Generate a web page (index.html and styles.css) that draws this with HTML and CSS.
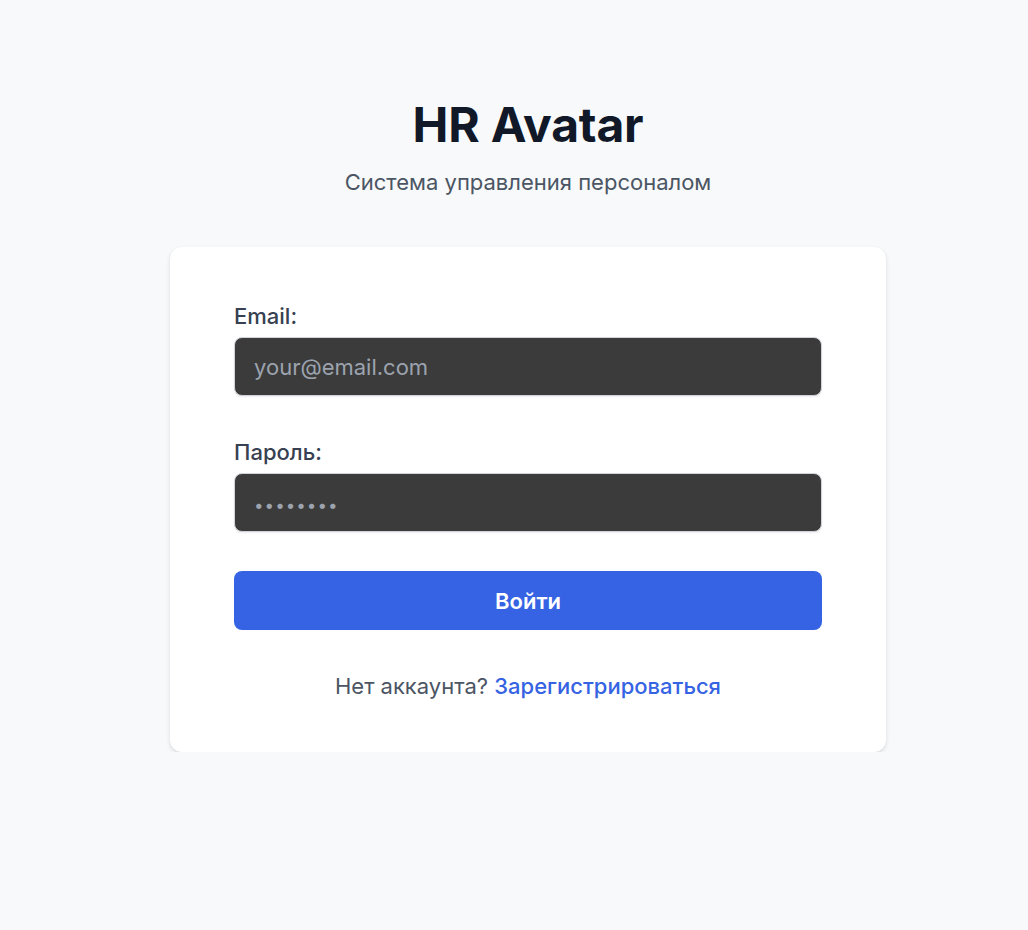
FILE: index.html
```html
<!DOCTYPE html>
<html lang="ru">
<head>
<meta charset="utf-8">
<title>HR Avatar</title>
<link rel="stylesheet" href="styles.css">
</head>
<body>
<main class="page">
  <header class="brand">
    <h1 class="brand-title">HR Avatar</h1>
    <p class="brand-sub">Система управления персоналом</p>
  </header>
  <section class="card">
    <form class="form">
      <div class="field">
        <label class="label" for="email">Email:</label>
        <input class="input" id="email" type="email" placeholder="your@email.com">
      </div>
      <div class="field">
        <label class="label" for="pass">Пароль:</label>
        <input class="input input-pass" id="pass" type="password" placeholder="••••••••">
      </div>
      <button class="btn" type="button">Войти</button>
    </form>
    <p class="foot">Нет аккаунта? <a class="link" href="#">Зарегистрироваться</a></p>
  </section>
</main>
</body>
</html>
```

FILE: styles.css
```css
* { box-sizing: border-box; }
html, body { margin: 0; padding: 0; }
body {
  background: #f8f9fb;
  font-family: Inter, "Liberation Sans", sans-serif;
  color: #111827;
}
.page {
  display: flex;
  flex-direction: column;
  align-items: center;
  padding: 96px 0 0 28px;
}
.brand { text-align: center; }
.brand-title {
  margin: 0;
  font-size: 48px;
  line-height: 58px;
  font-weight: 700;
  color: #111827;
  letter-spacing: -0.2px;
}
.brand-sub {
  margin: 13px 0 0;
  font-size: 22px;
  line-height: 30px;
  color: #4b5563;
}
.card {
  margin-top: 50px;
  width: 716px;
  background: #fff;
  border-radius: 12px;
  box-shadow: 0 2px 5px rgba(0,0,0,0.1), 0 1px 2px rgba(0,0,0,0.06);
  padding: 54px 64px 51px;
}
.form { display: flex; flex-direction: column; }
.field { display: flex; flex-direction: column; margin-bottom: 41px; }
.field + .btn { margin-top: -2px; }
.label {
  font-size: 22px;
  line-height: 30px;
  font-weight: 500;
  color: #374151;
  margin-bottom: 6px;
}
.input {
  height: 59px;
  border: 1px solid #d1d5db;
  border-radius: 8px;
  background: #3b3b3b;
  color: #e5e7eb;
  font-family: inherit;
  font-size: 22px;
  padding: 0 19px;
  outline: none;
  box-shadow: 0 1px 2px rgba(0,0,0,0.08);
}
.input::placeholder { color: #9ca3af; }
.input-pass::placeholder { letter-spacing: 1px; font-size: 17px; }
.btn {
  height: 59px;
  border: none;
  border-radius: 8px;
  background: #3563e3;
  color: #fff;
  font-family: inherit;
  font-size: 22px;
  font-weight: 600;
  cursor: pointer;
}
.foot {
  margin: 41px 0 0;
  text-align: center;
  font-size: 22px;
  line-height: 30px;
  color: #4b5563;
}
.link {
  color: #3563e3;
  font-weight: 500;
  text-decoration: none;
}
```
